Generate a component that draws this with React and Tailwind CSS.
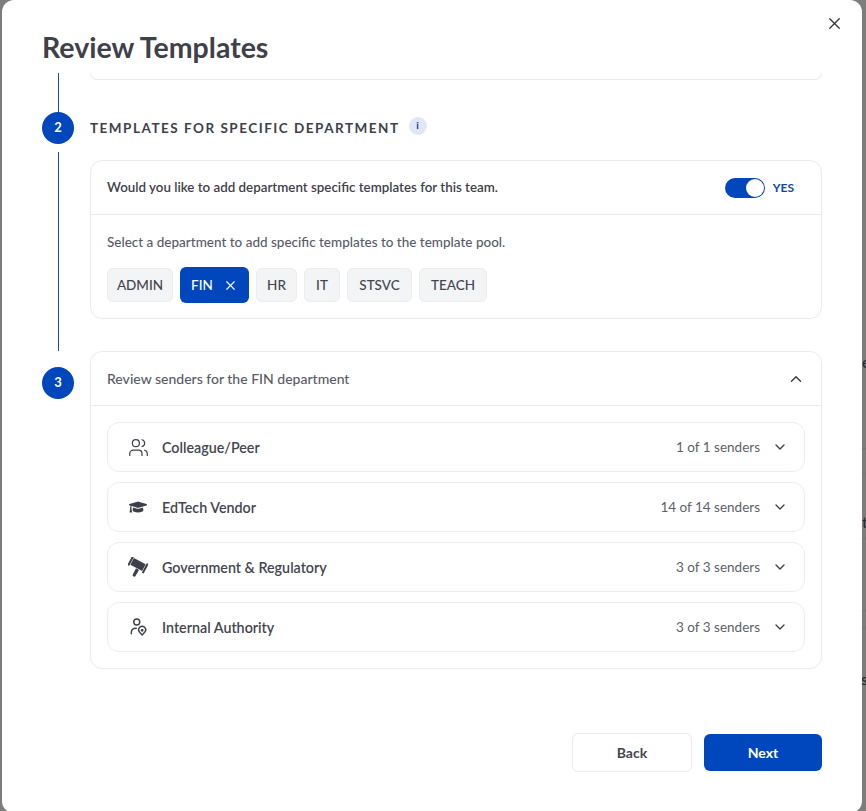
import React from "react";
import { Users, ChevronDown, ChevronUp, X } from "lucide-react";
import { FaGraduationCap } from "react-icons/fa";

function PersonPin({ className }) {
  return (
    <svg viewBox="0 0 24 24" className={className} fill="none" stroke="currentColor" strokeWidth="1.7" strokeLinecap="round" strokeLinejoin="round">
      <circle cx="10.5" cy="6" r="3.6" />
      <path d="M4 20v-1.5C4 15.5 6.5 13.5 10 13.5" />
      <path d="M17 21.5l-3.2-3.4a4.2 4.2 0 1 1 6.4 0z" />
      <circle cx="17" cy="16" r="0.9" />
    </svg>
  );
}

function Gavel({ className }) {
  return (
    <svg viewBox="0 0 24 24" className={className} fill="currentColor">
      <g transform="rotate(28 12 9)">
        <rect x="4" y="4.5" width="16" height="9" />
        <rect x="1" y="2.5" width="2.4" height="13" rx="0.6" />
        <rect x="20.6" y="2.5" width="2.4" height="13" rx="0.6" />
      </g>
      <path d="M9.6 13.5l3.6 2-4.2 7.2a1.6 1.6 0 0 1-2.2.6l-0.4-.2a1.6 1.6 0 0 1-.6-2.2z" />
    </svg>
  );
}

function Chip({ label, w }) {
  return (
    <div className={"h-[34px] flex items-center justify-center rounded-md border border-[#ececef] bg-[#f3f4f5] text-[#44464f] text-[13.5px] font-medium " + w}>
      {label}
    </div>
  );
}

function SenderRow({ icon, label, count }) {
  return (
    <div className="h-[50px] flex items-center rounded-xl border border-[#ebedf0] pl-[19px] pr-[16px]">
      <div className="w-[22px] h-[22px] flex items-center justify-center text-[#3e4049]">{icon}</div>
      <div className="ml-[13px] pt-[1px] text-[14.3px] font-semibold text-[#44464f]">{label}</div>
      <div className="ml-auto pt-[1px] text-[13.5px] text-[#5d5f68]">{count}</div>
      <ChevronDown className="ml-[12px] w-[16px] h-[16px] text-[#3e4049]" strokeWidth={2} />
    </div>
  );
}

export default function App() {
  return (
    <div className="relative h-[811px] w-[866px] bg-[#7d7d80] pl-[2px] pr-[4px] overflow-hidden" style={{ fontFamily: '"Lato", "Noto Sans", sans-serif' }}>
      <span className="absolute left-[862px] top-[350px] text-[16px] font-medium text-[#2c2c2e]">e</span>
      <span className="absolute left-[862px] top-[510px] text-[16px] font-medium text-[#2c2c2e]">t</span>
      <span className="absolute left-[861px] top-[667px] text-[16px] font-medium text-[#2c2c2e]">si</span>
      <div className="absolute left-[862px] top-[448px] w-[4px] h-px bg-[#747477]" />
      <div className="absolute left-[862px] top-[473px] w-[4px] h-px bg-[#747477]" />
      <div className="absolute left-[862px] top-[538px] w-[4px] h-px bg-[#747477]" />
      <div className="absolute left-[862px] top-[610px] w-[4px] h-px bg-[#747477]" />
      <div className="absolute left-[862px] top-[627px] w-[4px] h-px bg-[#747477]" />

      <div className="relative h-[813px] bg-white rounded-xl flex flex-col">
        <button className="absolute right-[18px] top-[14px] text-[#33353d]">
          <X className="w-[19px] h-[19px]" strokeWidth={1.7} />
        </button>

        <h1 className="pl-[40px] pt-[29px] h-[73px] text-[28.5px] leading-[36px] font-bold text-[#3f414a]">Review Templates</h1>

        <div className="h-[596px] pl-[40px] pr-[40px] flex flex-col overflow-hidden">
          <div className="flex shrink-0">
            <div className="w-[32px] flex justify-center">
              <div className="w-px h-[39px] bg-[#1d4f91]" />
            </div>
            <div className="ml-[16px] flex-1 h-[7px] rounded-b-xl border-x border-b border-[#e8ebf1]" />
          </div>

          <div className="flex h-[48px] shrink-0">
            <div className="w-[32px] h-[32px] rounded-full bg-[#0046bd] text-white text-[13px] font-bold flex items-center justify-center">2</div>
            <div className="ml-[16px] h-[32px] flex items-center gap-[9px]">
              <span className="pt-[1px] text-[13.5px] font-bold tracking-[1.5px] text-[#3f414a]">TEMPLATES FOR SPECIFIC DEPARTMENT</span>
              <span className="mb-[5px] w-[18px] h-[18px] rounded-full bg-[#e1e7f8] text-[#0b3a8f] text-[10px] font-bold flex items-center justify-center">i</span>
            </div>
          </div>

          <div className="flex h-[159px] shrink-0">
            <div className="w-[32px] h-[159px] flex justify-center">
              <div className="w-px h-[199px] shrink-0 -mt-[8px] bg-[#1d4f91]" />
            </div>
            <div className="ml-[16px] flex-1 h-[159px] rounded-xl border border-[#e8ebf1] flex flex-col">
              <div className="h-[54px] shrink-0 px-[16px] flex items-center border-b border-[#e8ebf1]">
                <span className="text-[13.35px] font-semibold text-[#3f414a]">Would you like to add department specific templates for this team.</span>
                <div className="ml-auto w-[40px] h-[20px] rounded-full bg-[#0046bd] flex items-center justify-end pr-[1px]">
                  <div className="w-[18px] h-[18px] rounded-full bg-white" />
                </div>
                <span className="ml-[8px] mr-[11px] text-[12px] font-bold text-[#0b4aa8]">YES</span>
              </div>
              <div className="px-[16px] pt-[18px]">
                <div className="text-[13.5px] leading-[18px] font-medium text-[#5a5c65]">Select a department to add specific templates to the template pool.</div>
                <div className="mt-[16px] flex items-center gap-[7px] h-[36px]">
                  <Chip label="ADMIN" w="w-[66px]" />
                  <div className="h-9 w-[69px] flex items-center justify-center gap-[10px] rounded-md bg-[#0046bd] text-white text-[13.5px] font-medium">
                    FIN
                    <X className="w-[15px] h-[15px]" strokeWidth={1.8} />
                  </div>
                  <Chip label="HR" w="w-[41px]" />
                  <Chip label="IT" w="w-[36px]" />
                  <Chip label="STSVC" w="w-[65px]" />
                  <Chip label="TEACH" w="w-[68px]" />
                </div>
              </div>
            </div>
          </div>

          <div className="flex mt-[32px] shrink-0">
            <div className="w-[32px] pt-[16px]">
              <div className="w-[32px] h-[32px] rounded-full bg-[#0046bd] text-white text-[13px] font-bold flex items-center justify-center">3</div>
            </div>
            <div className="ml-[16px] flex-1 h-[318px] rounded-xl border border-[#e8ebf1] flex flex-col">
              <div className="h-[54px] shrink-0 pl-[16px] pr-[16px] flex items-center justify-between border-b border-[#e8ebf1]">
                <span className="text-[14px] font-medium text-[#5a5c65]">Review senders for the FIN department</span>
                <ChevronUp className="w-[18px] h-[18px] text-[#3e4049]" strokeWidth={2} />
              </div>
              <div className="px-[16px] pt-[16px] flex flex-col gap-[10px]">
                <SenderRow icon={<Users className="w-[21px] h-[21px]" strokeWidth={1.4} />} label="Colleague/Peer" count="1 of 1 senders" />
                <SenderRow icon={<FaGraduationCap className="w-[18px] h-[18px]" />} label="EdTech Vendor" count="14 of 14 senders" />
                <SenderRow icon={<Gavel className="w-[20px] h-[20px]" />} label="Government & Regulatory" count="3 of 3 senders" />
                <SenderRow icon={<PersonPin className="w-[20px] h-[20px]" />} label="Internal Authority" count="3 of 3 senders" />
              </div>
            </div>
          </div>
        </div>

        <div className="pr-[40px] pt-[64px] flex justify-end items-center gap-[12px]">
          <button className="w-[120px] h-[39px] rounded-md border border-[#e8ebf1] bg-white text-[14px] font-bold text-[#44464f]">Back</button>
          <button className="w-[118px] h-[37px] rounded-md bg-[#0046bd] text-[14px] font-bold text-white">Next</button>
        </div>
      </div>
    </div>
  );
}
